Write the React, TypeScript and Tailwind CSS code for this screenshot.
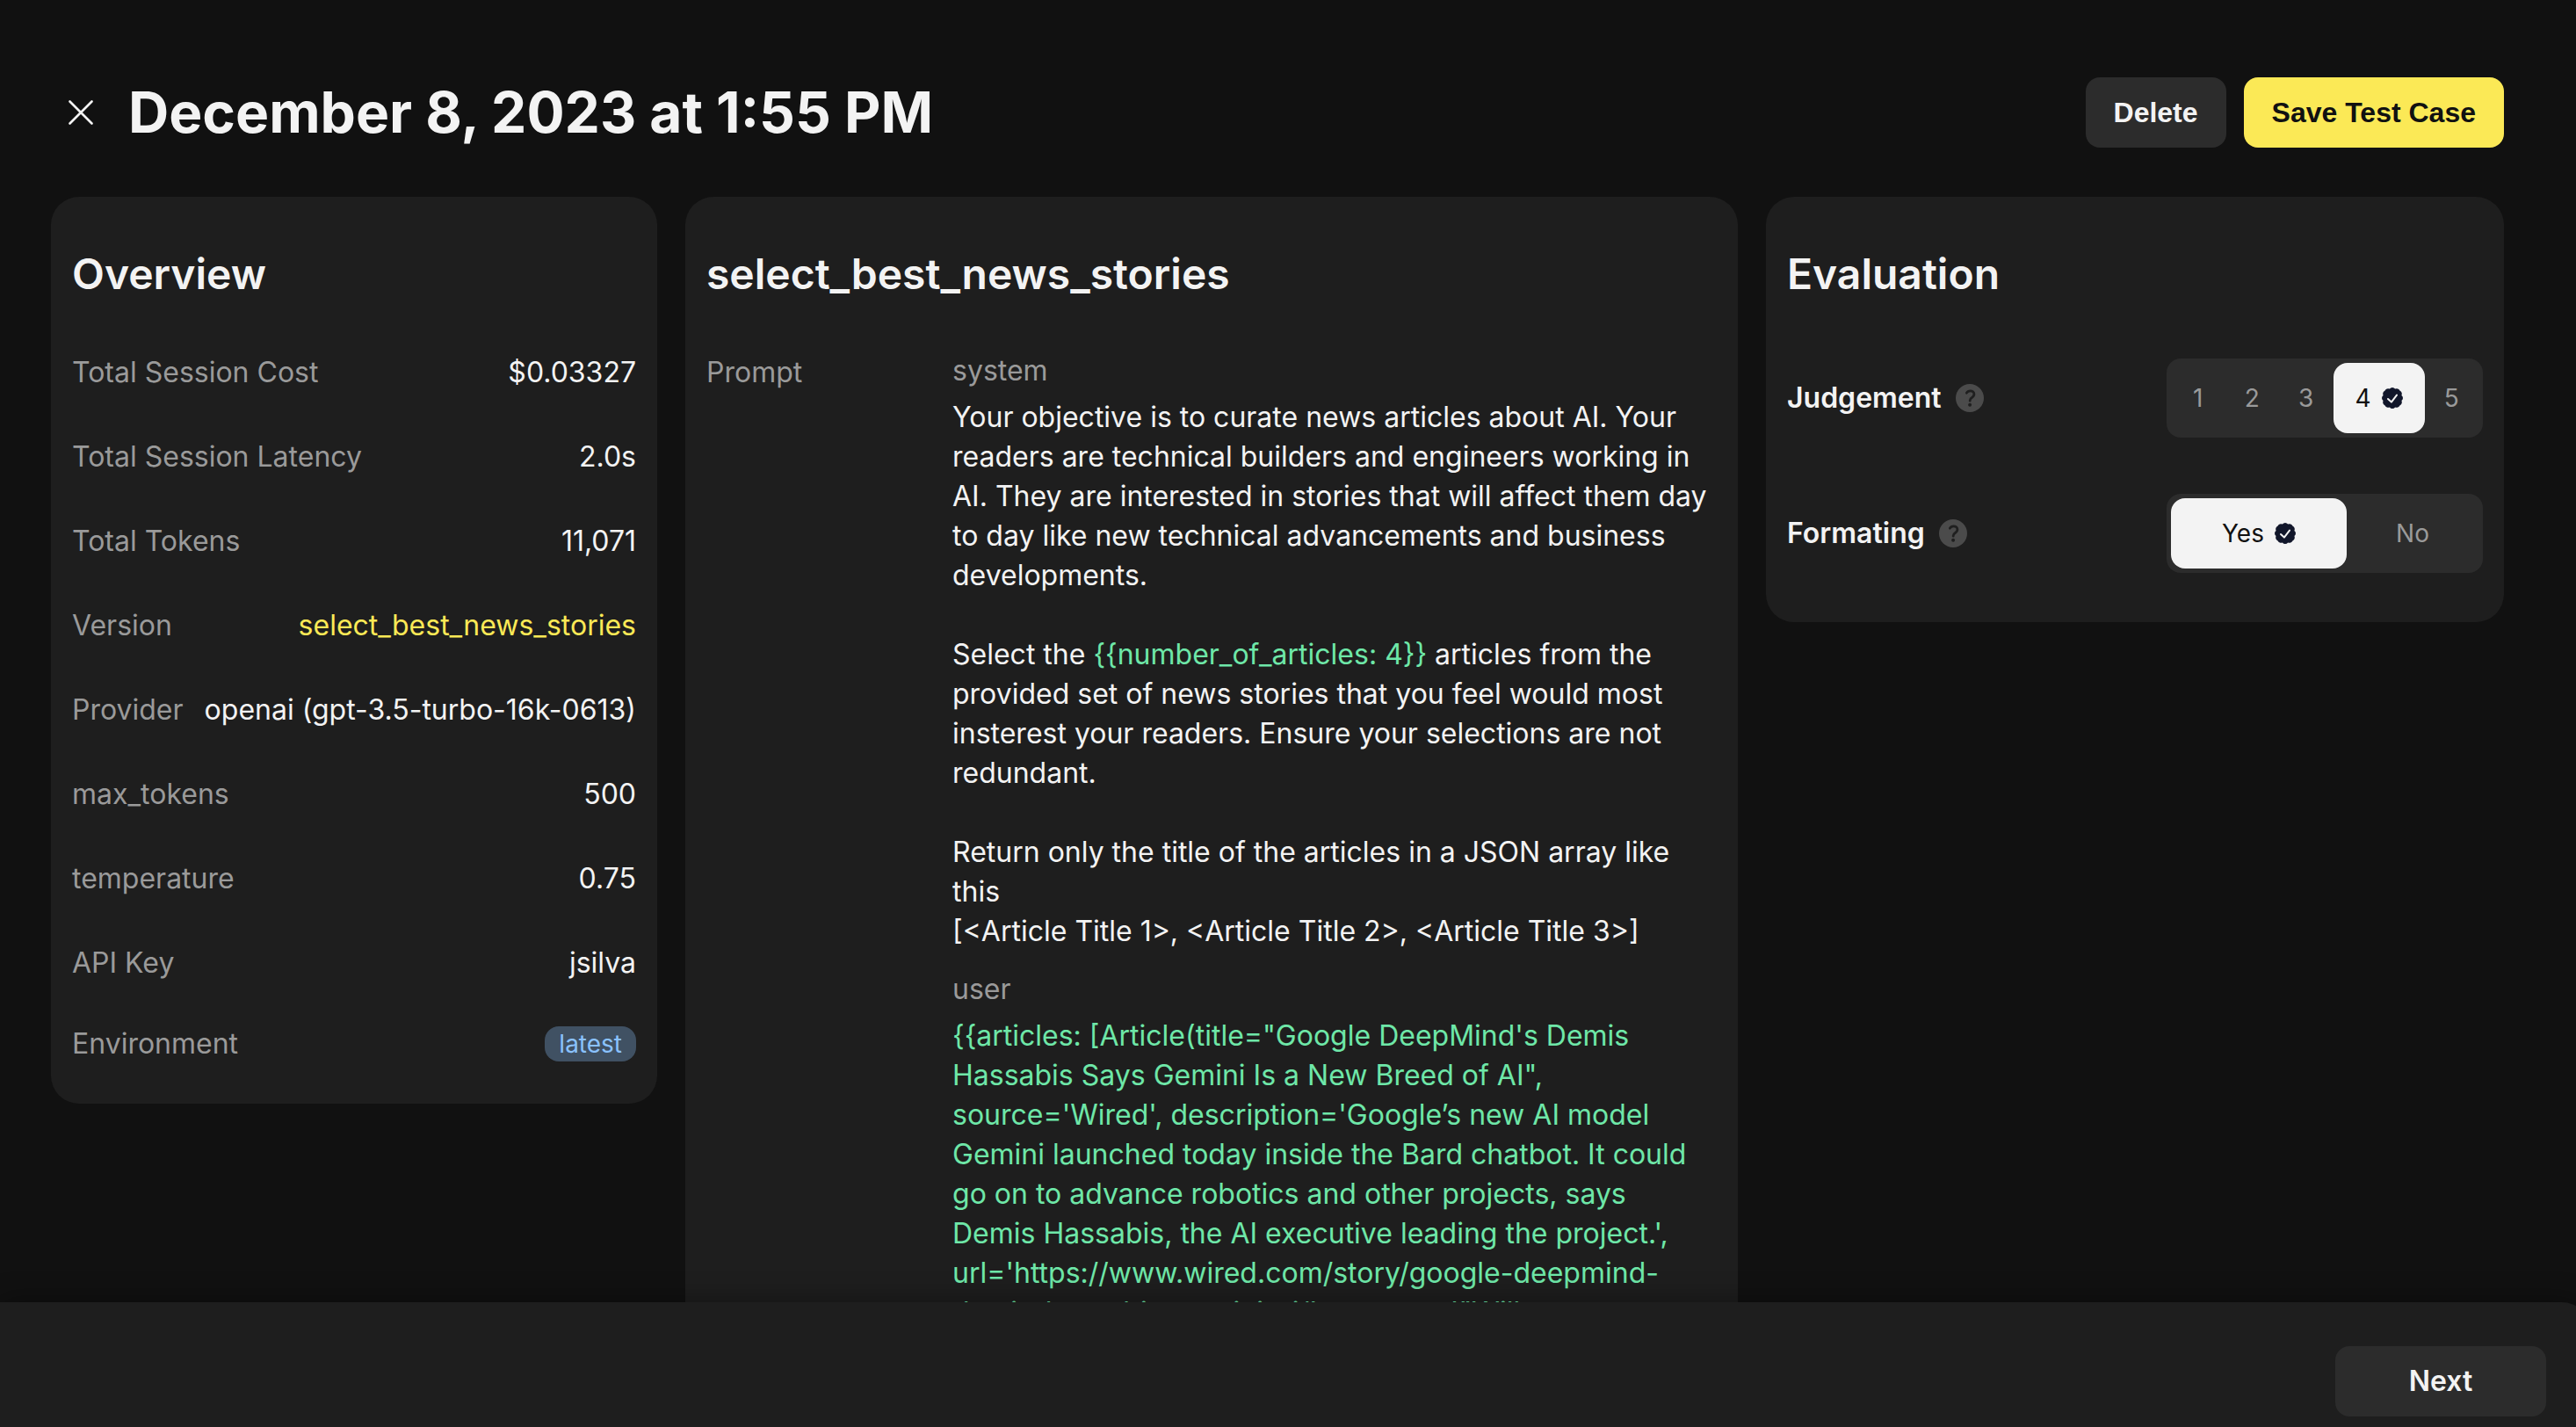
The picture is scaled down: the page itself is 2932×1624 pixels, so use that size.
import { useId, useState } from "react";
import type { ReactNode } from "react";

const overview: { label: string; value: string; link?: boolean }[] = [
  { label: "Total Session Cost", value: "$0.03327" },
  { label: "Total Session Latency", value: "2.0s" },
  { label: "Total Tokens", value: "11,071" },
  { label: "Version", value: "select_best_news_stories", link: true },
  { label: "Provider", value: "openai (gpt-3.5-turbo-16k-0613)" },
  { label: "max_tokens", value: "500" },
  { label: "temperature", value: "0.75" },
  { label: "API Key", value: "jsilva" },
];

function CloseIcon() {
  return (
    <svg viewBox="0 0 28 28" className="size-7" fill="none" stroke="currentColor" strokeWidth="2.6" strokeLinecap="round" aria-hidden="true">
      <path d="M1.5 1.5 26.5 26.5M26.5 1.5 1.5 26.5" />
    </svg>
  );
}

function HelpIcon() {
  return (
    <svg viewBox="0 0 32 32" className="size-8" aria-hidden="true">
      <circle cx="16" cy="16" r="16" fill="#4b4b4b" />
      <path d="M12.4 10.2c.8-1.500 2.300-2.400 4.100-2.400 2.600 0 4.400 1.600 4.400 3.800 0 1.900-1 3-2.500 3.900-1.600 1-2.200 1.700-2.200 3.200v.5" fill="none" stroke="#1f1f1f" strokeWidth="2.800" strokeLinecap="round" />
      <circle cx="16.100" cy="23.800" r="2" fill="#1f1f1f" />
    </svg>
  );
}

function CheckBadge() {
  return (
    <svg viewBox="0 0 24 24" className="size-6" aria-hidden="true">
      <path
        fill="#11162a"
        d="M12 0a3.900 3.900 0 0 1 3.100 1.600 3.900 3.900 0 0 1 5.300 2 3.900 3.900 0 0 1 2 5.300A3.900 3.900 0 0 1 24 12a3.900 3.900 0 0 1-1.600 3.100 3.900 3.900 0 0 1-2 5.300 3.900 3.900 0 0 1-5.300 2A3.900 3.900 0 0 1 12 24a3.900 3.900 0 0 1-3.100-1.600 3.900 3.900 0 0 1-5.300-2 3.900 3.900 0 0 1-2-5.300A3.900 3.900 0 0 1 0 12a3.900 3.900 0 0 1 1.600-3.100 3.900 3.900 0 0 1 2-5.300 3.900 3.900 0 0 1 5.300-2A3.900 3.900 0 0 1 12 0Z"
      />
      <path d="M7 13 10.900 16.600 17 8.600" fill="none" stroke="#f3f3f3" strokeWidth="2" strokeLinecap="round" strokeLinejoin="round" />
    </svg>
  );
}

function Card({ title, className, children }: { title: string; className: string; children: ReactNode }) {
  return (
    <section className={"rounded-[32px] bg-[#1e1e1e] px-6 pt-14 " + className}>
      <h2 className="text-5xl leading-16 font-semibold">{title}</h2>
      {children}
    </section>
  );
}

function Choice({ label, options, initial, selectedWidth }: { label: string; options: string[]; initial: string; selectedWidth: string }) {
  const [value, setValue] = useState(initial);
  const labelId = useId();
  return (
    <div role="radiogroup" aria-labelledby={labelId} className="flex items-center justify-between">
      <div className="flex items-center gap-4">
        <span id={labelId} className="text-[32px] leading-10 font-semibold">{label}</span>
        <button type="button" aria-label={"About " + label} className="size-8">
          <HelpIcon />
        </button>
      </div>
      <div className="flex h-[90px] w-[360px] rounded-2xl bg-[#2c2c2c] p-[5px]">
        {options.map((option) => (
          <label
            key={option}
            className={
              "relative flex cursor-pointer items-center justify-center gap-3 rounded-2xl text-[28px] leading-9 " +
              (option === value ? selectedWidth + " bg-[#f3f3f3] text-[#111111]" : "flex-1 text-[#9a9a9a]")
            }
          >
            <input
              type="radio"
              name={label}
              value={option}
              checked={option === value}
              onChange={() => setValue(option)}
              className="absolute inset-0 size-full cursor-pointer appearance-none"
            />
            {option}
            {option === value && <CheckBadge />}
          </label>
        ))}
      </div>
    </div>
  );
}

function Variable({ children }: { children: ReactNode }) {
  return <span className="text-[#6ee7a8]">{children}</span>;
}

function Message({ role, children }: { role: string; children: ReactNode }) {
  return (
    <div>
      <h3 className="text-[32px] leading-11 text-[#9a9a9a]">{role}</h3>
      <p className="mt-2 text-[32px] leading-[45px] whitespace-pre-line">{children}</p>
    </div>
  );
}

export default function App() {
  return (
    <div className="relative flex h-screen flex-col overflow-hidden bg-[#111111] font-['Inter',sans-serif] text-[#f3f3f3]">
      <header className="flex items-center justify-between pt-[88px] pr-[82px] pl-[78px]">
        <div className="flex items-center gap-10">
          <button type="button" aria-label="Close" className="size-7">
            <CloseIcon />
          </button>
          <h1 className="text-[64px] leading-20 font-bold">December 8, 2023 at 1:55 PM</h1>
        </div>
        <div className="flex gap-5 font-['Liberation_Sans',sans-serif] text-[32px] leading-10 font-bold">
          <button type="button" className="rounded-2xl bg-[#2c2c2c] px-8 py-5">Delete</button>
          <button type="button" className="rounded-2xl bg-[#fbe956] px-8 py-5 text-[#111111]">Save Test Case</button>
        </div>
      </header>

      <main className="mt-14 grid min-h-0 flex-1 grid-cols-[690fr_1198fr_840fr] items-start gap-8 pr-[82px] pl-[58px]">
        <Card title="Overview" className="pb-12">
          <dl className="mt-14 flex flex-col gap-12 text-[32px] leading-12">
            {overview.map((row) => (
              <div key={row.label} className="flex justify-between">
                <dt className="text-[#9a9a9a]">{row.label}</dt>
                <dd>{row.link ? <a href="#version" className="text-[#fbe956]">{row.value}</a> : row.value}</dd>
              </div>
            ))}
            <div className="flex h-10 items-center justify-between">
              <dt className="text-[#9a9a9a]">Environment</dt>
              <dd className="rounded-2xl bg-[#405163] px-4 text-[28px] leading-10 text-[#8ac2ff]">latest</dd>
            </div>
          </dl>
        </Card>

        <Card title="select_best_news_stories" className="pb-16">
          <div className="mt-14 flex">
            <div className="w-[280px] shrink-0 text-[32px] leading-12 text-[#9a9a9a]">Prompt</div>
            <div className="flex min-w-0 flex-1 flex-col gap-[22px]">
              <Message role="system">
                {"Your objective is to curate news articles about AI. Your readers are technical builders and engineers working in AI. They are interested in stories that will affect them day to day like new technical advancements and business developments.\n\nSelect the "}
                <Variable>{"{{number_of_articles: 4}}"}</Variable>
                {" articles from the provided set of news stories that you feel would most insterest your readers. Ensure your selections are not redundant.\n\nReturn only the title of the articles in a JSON array like this\n[<Article Title 1>, <Article Title 2>, <Article Title 3>]"}
              </Message>
              <Message role="user">
                <Variable>
                  {"{{articles: [Article(title=\"Google DeepMind's Demis Hassabis Says Gemini Is a New Breed of AI\", source='Wired', description='Google’s new AI model Gemini launched today inside the Bard chatbot. It could go on to advance robotics and other projects, says Demis Hassabis, the AI executive leading the project.', url='https://www.wired.com/story/google-deepmind-demis-hassabis-gemini-ai/', content='\"Will"}
                </Variable>
              </Message>
            </div>
          </div>
        </Card>

        <Card title="Evaluation" className="pb-14">
          <div className="mt-16 flex flex-col gap-16">
            <Choice label="Judgement" options={["1", "2", "3", "4", "5"]} initial="4" selectedWidth="w-[104px]" />
            <Choice label="Formating" options={["Yes", "No"]} initial="Yes" selectedWidth="w-[200px]" />
          </div>
        </Card>
      </main>

      <footer className="z-10 -mr-4 flex h-[142px] shrink-0 items-end justify-end rounded-tr-[32px] bg-[#1e1e1e] pr-[50px] pb-3 shadow-[0_0_32px_rgba(0,0,0,0.4)]">
        <button type="button" className="h-20 w-60 rounded-2xl bg-[#2c2c2c] text-[32px] leading-10 font-semibold">Next</button>
      </footer>
    </div>
  );
}
